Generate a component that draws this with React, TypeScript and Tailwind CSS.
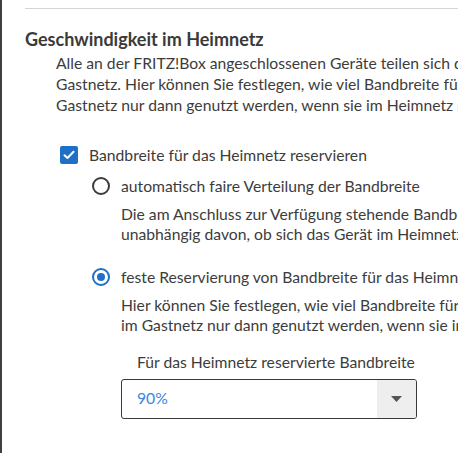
import React from 'react';

const App: React.FC = () => {
  return (
    <div className="w-[458px] h-[453px] overflow-hidden bg-white border-l-2 border-[#404040] font-['Lato',sans-serif] text-[#3c3c3c]">
      <div className="pl-[23px] pt-2">
        <div className="h-px bg-[#d4d4d4]" />
        <h2 className="mt-[18px] text-[18px] leading-[24px] font-bold text-[#3a3a3a] whitespace-nowrap">
          Geschwindigkeit im Heimnetz
        </h2>
        <p className="pl-[31px] mt-[2px] text-[15.7px] leading-[21px] whitespace-nowrap">
          Alle an der FRITZ!Box angeschlossenen Geräte teilen sich die verfügbare Bandbreite, egal ob im Heimnetz oder im
          <br />
          Gastnetz. Hier können Sie festlegen, wie viel Bandbreite für Geräte im Heimnetz reserviert wird. Diese kann im
          <br />
          Gastnetz nur dann genutzt werden, wenn sie im Heimnetz nicht benötigt wird.
        </p>

        <label className="mt-[28px] ml-[35px] flex items-center gap-[11px] whitespace-nowrap">
          <span className="w-[18px] h-[18px] rounded-[2px] bg-[#1f6fc5] flex items-center justify-center shrink-0">
            <svg width="12" height="10" viewBox="0 0 12 10" fill="none">
              <path d="M1.5 5.2 L4.5 8 L10.5 1.8" stroke="white" strokeWidth="2" strokeLinecap="round" strokeLinejoin="round" />
            </svg>
          </span>
          <span className="text-[15.7px] leading-[22px]">Bandbreite für das Heimnetz reservieren</span>
        </label>

        <div className="ml-[67px] mt-[9px]">
          <RadioOption
            checked={false}
            label="automatisch faire Verteilung der Bandbreite"
            lines={[
              'Die am Anschluss zur Verfügung stehende Bandbreite wird gleichmäßig verteilt,',
              'unabhängig davon, ob sich das Gerät im Heimnetz oder im Gastnetz befindet.',
            ]}
          />
          <div className="mt-[22px]">
            <RadioOption
              checked
              label="feste Reservierung von Bandbreite für das Heimnetz"
              lines={[
                'Hier können Sie festlegen, wie viel Bandbreite für das Heimnetz reserviert wird. Diese kann',
                'im Gastnetz nur dann genutzt werden, wenn sie im Heimnetz nicht benötigt wird.',
              ]}
            />
          </div>

          <div className="pl-[29px] mt-[16px]">
            <p className="pl-[16px] text-[15.7px] leading-[22px] whitespace-nowrap">Für das Heimnetz reservierte Bandbreite</p>
            <div className="mt-[6px] w-[296px] h-[40px] flex border border-[#3a3a3a] rounded-[3px] overflow-hidden">
              <div className="flex-1 flex items-center pl-[15px] text-[15.7px] text-[#3b86e0]">90%</div>
              <div className="w-[39px] bg-[#eeeeee] flex items-center justify-center">
                <svg width="11" height="6" viewBox="0 0 11 6">
                  <path d="M0 0 H11 L5.5 6 Z" fill="#555" />
                </svg>
              </div>
            </div>
          </div>
        </div>
      </div>
    </div>
  );
};

const RadioOption = ({ checked, label, lines }: { checked: boolean; label: string; lines: string[] }) => (
  <div className="whitespace-nowrap">
    <div className="flex items-center gap-[11px]">
      {checked ? (
        <span className="w-[18px] h-[18px] rounded-full border-2 border-[#1f6fc5] flex items-center justify-center shrink-0">
          <span className="w-[8px] h-[8px] rounded-full bg-[#1f6fc5]" />
        </span>
      ) : (
        <span className="w-[18px] h-[18px] rounded-full border-2 border-[#3c3c3c] shrink-0" />
      )}
      <span className="text-[15.7px] leading-[22px]">{label}</span>
    </div>
    <p className="pl-[29px] mt-[7px] text-[15.7px] leading-[20px]">
      {lines[0]}
      <br />
      {lines[1]}
    </p>
  </div>
);

export default App;
